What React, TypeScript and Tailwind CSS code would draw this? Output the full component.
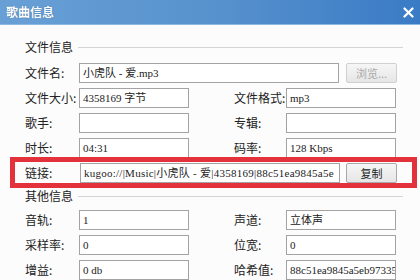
import React from "react";

const cjk = "font-['Noto_Sans_CJK_SC',sans-serif]";
const val = "font-['Liberation_Serif','Noto_Sans_CJK_SC',serif]";

const Field = ({ value, w, extra = "" }: { value?: string; w: string; extra?: string }) => (
  <div
    className={`${w} h-[20px] shrink-0 border border-[#a3a3a3] bg-white pl-[3px] text-[11px] leading-[18px] text-[#222] whitespace-nowrap overflow-hidden ${val} ${extra}`}
  >
    {value}
  </div>
);

const Label = ({ text, w }: { text: string; w: string }) => (
  <div className={`${w} shrink-0 text-[12px] leading-[20px] text-[#222] ${cjk}`}>{text}</div>
);

const Pair = ({
  l1,
  v1,
  l2,
  v2,
}: {
  l1: string;
  v1?: string;
  l2: string;
  v2?: string;
}) => (
  <div className="flex items-center h-[20px]">
    <Label text={l1} w="w-[54px]" />
    <Field value={v1} w="w-[110px]" />
    <div className="w-[45px] shrink-0" />
    <Label text={l2} w="w-[52px]" />
    <Field value={v2} w="w-[110px]" />
  </div>
);

const Button = ({ text, disabled }: { text: string; disabled?: boolean }) => (
  <div
    className={`w-[51px] h-[20px] shrink-0 border ${
      disabled ? "border-[#d0d0d0] text-[#a8a8a8]" : "border-[#a9a9a9] text-[#222]"
    } bg-gradient-to-b from-[#f6f6f6] to-[#e6e6e6] rounded-[2px] text-[11px] leading-[18px] text-center ${cjk}`}
  >
    {text}
  </div>
);

const GroupHeader = ({ title }: { title: string }) => (
  <div className="flex items-center h-[14px] w-[378px]">
    <span className={`text-[12px] leading-[14px] text-[#222] ${cjk}`}>{title}</span>
    <div className="flex-1 ml-[5px] h-px bg-[#d4d4d4]" />
  </div>
);

export default function App() {
  return (
    <div className="w-[420px] h-[280px] overflow-hidden bg-[#fcfcfc] flex flex-col">
      {/* title bar */}
      <div className="h-[25px] shrink-0 flex items-center justify-between bg-gradient-to-r from-[#68a0d6] via-[#5892cd] to-[#3a7bc6] border-b border-[#8fb8e0] pl-[6px] pr-[5px]">
        <span className={`text-[12px] font-bold text-white [text-shadow:0_0_1px_#2a5a8a] ${cjk}`}>
          歌曲信息
        </span>
        <svg width="11" height="11" viewBox="0 0 11 11" className="mr-[1px]">
          <path d="M1.5 1.5 L9.5 9.5 M9.5 1.5 L1.5 9.5" stroke="#fff" strokeWidth="2.2" strokeLinecap="round" />
        </svg>
      </div>

      <div className="flex flex-col pl-[25px]">
        <div className="mt-[15px]">
          <GroupHeader title="文件信息" />
        </div>

        <div className="mt-[9px] flex flex-col gap-[5px]">
          <div className="flex items-center h-[20px]">
            <Label text="文件名:" w="w-[54px]" />
            <Field value="小虎队 - 爱.mp3" w="w-[260px]" />
            <div className="ml-[7px]">
              <Button text="浏览..." disabled />
            </div>
          </div>
          <Pair l1="文件大小:" v1="4358169 字节" l2="文件格式:" v2="mp3" />
          <Pair l1="歌手:" l2="专辑:" />
          <Pair l1="时长:" v1="04:31" l2="码率:" v2="128 Kbps" />
        </div>
      </div>

      {/* highlighted link row */}
      <div className="ml-[10px] mt-[-1px] w-[407px] h-[34px] border-[5px] border-[#e3323b] pl-[10px] pt-[1px]">
        <div className="flex items-center h-[20px]">
          <Label text="链接:" w="w-[55px]" />
          <Field
            value="kugoo://|Music|小虎队 - 爱|4358169|88c51ea9845a5e"
            w="w-[260px]"
            extra="tracking-[0.25px]"
          />
          <div className="ml-[6px]">
            <Button text="复制" />
          </div>
        </div>
      </div>

      <div className="flex flex-col pl-[25px]">
        <div className="mt-[1px]">
          <GroupHeader title="其他信息" />
        </div>
        <div className="mt-[7px] flex flex-col gap-[5px]">
          <Pair l1="音轨:" v1="1" l2="声道:" v2="立体声" />
          <Pair l1="采样率:" v1="0" l2="位宽:" v2="0" />
          <Pair l1="增益:" v1="0 db" l2="哈希值:" v2="88c51ea9845a5eb97335" />
        </div>
      </div>
    </div>
  );
}
